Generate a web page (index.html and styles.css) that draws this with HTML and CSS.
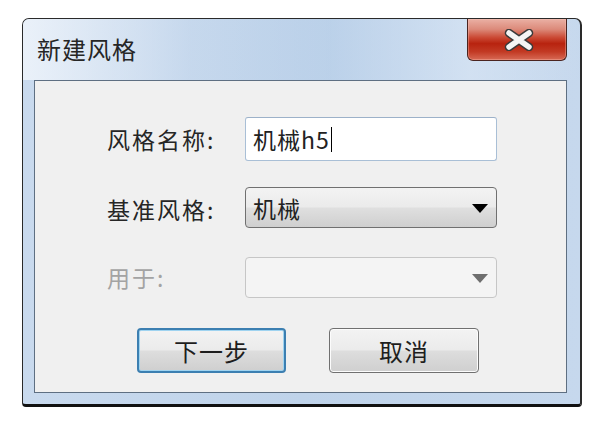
FILE: index.html
```html
<!DOCTYPE html>
<html lang="zh-CN">
<head>
<meta charset="utf-8">
<title>新建风格</title>
<link rel="stylesheet" href="styles.css">
</head>
<body>
<div class="page">
  <div class="window">
    <div class="titlebar">
      <span class="title">新建风格</span>
      <div class="close">
        <svg width="32" height="22" viewBox="0 0 32 22">
          <path d="M6 4 L26 18 M26 4 L6 18" stroke="#3a3a3a" stroke-width="8.5" stroke-linecap="round" fill="none"/>
          <path d="M6 4 L26 18 M26 4 L6 18" stroke="#f4f4f4" stroke-width="5.5" stroke-linecap="round" fill="none"/>
        </svg>
      </div>
    </div>
    <div class="client">
      <div class="form">
        <div class="label">风格名称:</div>
        <div class="field"><div class="textbox">机械h5<span class="caret"></span></div></div>
        <div class="label">基准风格:</div>
        <div class="field"><div class="combo"><span class="value">机械</span><span class="arrow"></span></div></div>
        <div class="label disabled">用于:</div>
        <div class="field"><div class="combo combo-disabled"><span class="value"></span><span class="arrow"></span></div></div>
      </div>
      <div class="buttons">
        <div class="btn btn-default">下一步</div>
        <div class="btn">取消</div>
      </div>
    </div>
  </div>
</div>
</body>
</html>
```

FILE: styles.css
```css
html, body {
  margin: 0;
  padding: 0;
  background: #ffffff;
}
body {
  font-family: "Noto Sans CJK SC", "Noto Sans", sans-serif;
  color: #1c1c1c;
}
.page {
  padding: 18px 0 0 22px;
}
.window {
  border: 1px solid #2a2a2a;
  border-right-width: 2px;
  border-bottom-width: 3px;
  border-bottom-color: #111;
  border-radius: 7px 7px 4px 4px;
  background: linear-gradient(90deg, #c9daee 0%, #bfd3ea 50%, #c6d8ed 100%);
  display: flex;
  flex-direction: column;
  padding: 0 13px 11px 11px;
  box-sizing: border-box;
  width: 560px;
  height: 389px;
}
.titlebar {
  height: 61px;
  display: flex;
  justify-content: space-between;
  align-items: flex-start;
  background: linear-gradient(90deg, rgba(240,245,251,0.85) 0%, rgba(205,221,240,0.3) 30%, rgba(180,205,232,0.4) 55%, rgba(220,232,246,0.6) 80%, rgba(200,218,238,0.2) 100%);
  margin: 0 -13px 0 -11px;
  padding: 0 13px 0 14px;
  border-radius: 6px 6px 0 0;
}
.title {
  font-size: 24px;
  line-height: 26px;
  margin-top: 17px;
  color: #262626;
  letter-spacing: 1px;
}
.close {
  width: 100px;
  height: 42px;
  box-sizing: border-box;
  border: 1px solid #4a2420;
  border-top: none;
  border-radius: 0 0 6px 6px;
  background: linear-gradient(180deg, #eab0a4 0%, #dc8a7a 25%, #cb4a35 45%, #b8230f 60%, #c23a24 80%, #d86a55 100%);
  display: flex;
  align-items: center;
  justify-content: center;
  box-shadow: inset 0 0 0 1px rgba(255,200,190,0.35);
}
.close svg {
  display: block;
  margin-left: 4px;
}
.client {
  flex: 1;
  border: 1px solid #5e6f82;
  background: #f0f0f0;
  padding: 36px 0 0 72px;
  display: flex;
  flex-direction: column;
}
.form {
  display: grid;
  grid-template-columns: 138px 252px;
  grid-auto-rows: 70px;
}
.label {
  font-size: 23px;
  letter-spacing: 2px;
  height: 43px;
  display: flex;
  align-items: center;
  color: #262626;
}
.label.disabled {
  color: #a3a3a3;
  height: 40px;
}
.field {
  display: flex;
  align-items: flex-start;
}
.textbox {
  width: 252px;
  height: 44px;
  box-sizing: border-box;
  border: 1px solid #a9bfd6;
  border-top-color: #9cb1c9;
  border-radius: 3px;
  background: #ffffff;
  font-size: 23px;
  display: flex;
  align-items: center;
  padding-left: 7px;
  letter-spacing: 1px;
  color: #222;
}
.caret {
  display: inline-block;
  width: 1px;
  height: 25px;
  background: #000;
  margin-left: 1px;
}
.combo {
  width: 252px;
  height: 41px;
  box-sizing: border-box;
  border: 1px solid #707070;
  border-radius: 4px;
  background: linear-gradient(180deg, #f3f3f3 0%, #ebebeb 48%, #dfdfdf 52%, #cfcfcf 100%);
  display: flex;
  align-items: center;
  justify-content: space-between;
  padding: 0 8px 0 7px;
  font-size: 23px;
  letter-spacing: 1px;
  color: #222;
}
.arrow {
  width: 0;
  height: 0;
  border-left: 8px solid transparent;
  border-right: 8px solid transparent;
  border-top: 9px solid #000;
  margin-top: 2px;
}
.combo-disabled {
  border-color: #c6c6c6;
  background: #f4f4f4;
}
.combo-disabled .arrow {
  border-top-color: #6e6e6e;
}
.buttons {
  display: flex;
  gap: 43px;
  padding-left: 30px;
  margin-top: 1px;
}
.btn {
  width: 150px;
  height: 45px;
  box-sizing: border-box;
  border: 1px solid #707070;
  border-radius: 4px;
  background: linear-gradient(180deg, #f3f3f3 0%, #ebebeb 48%, #dddddd 52%, #cfcfcf 100%);
  display: flex;
  align-items: center;
  justify-content: center;
  font-size: 24px;
  letter-spacing: 1px;
  color: #1e1e1e;
  box-shadow: inset 0 0 0 1px #fcfcfc;
}
.btn-default {
  width: 149px;
  border: 2px solid #3c7fb1;
  box-shadow: inset 0 0 0 1px #9fd3f0;
}
```
